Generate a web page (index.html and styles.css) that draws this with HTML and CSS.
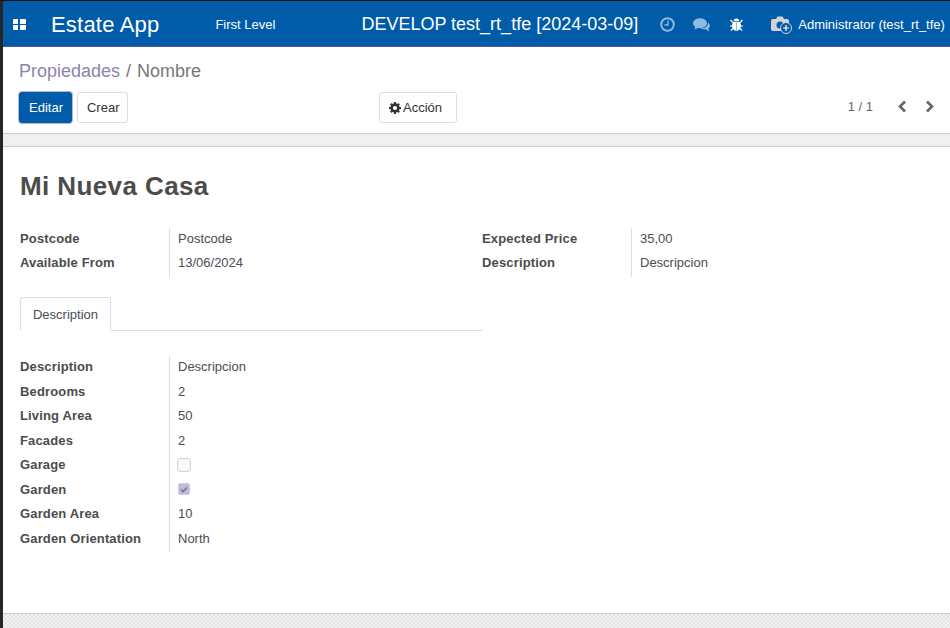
FILE: index.html
```html
<!DOCTYPE html>
<html lang="en">
  <head>
    <meta charset="UTF-8" />
    <meta name="viewport" content="width=device-width, initial-scale=1.0" />
    <title>Estate App</title>
    <link rel="stylesheet" href="styles.css">
  </head>
  <body>
    <header class="navbar">
      <svg class="apps-icon" width="13" height="11" viewBox="0 0 13 11">
        <path fill="#fff" d="M0 1q0-1 1-1h4v5H0zM7 0h5q1 0 1 1v4H7zM0 6h5v5H1q-1 0-1-1zM7 6h6v4q0 1-1 1H7z" />
      </svg>
      <span class="brand">Estate App</span>
      <span class="menu-item">First Level</span>
      <span class="env-name">DEVELOP test_rt_tfe [2024-03-09]</span>
      <div class="systray">
        <svg class="tray-icon" width="15" height="15" viewBox="0 0 15 15">
          <circle cx="7.5" cy="7.5" r="6.3" fill="none" stroke="#8fbbe0" stroke-width="2" />
          <path fill="none" stroke="#8fbbe0" stroke-width="1.3" d="M8 3.5V8H4.5" />
        </svg>
        <svg class="tray-icon" width="17" height="14" viewBox="0 0 17 14">
          <ellipse cx="7" cy="5.2" rx="7" ry="5" fill="#8fbbe0" />
          <path fill="#8fbbe0" d="M2.5 8 1.500 11.500 6 9.500z" />
          <path fill="#8fbbe0" d="M15 4.500c2.400 1.800 2.500 4.500.3 6l1 3-3.800-2.200c-2 .2-3.800-.1-5-1 4 .1 8-1.800 7.500-5.800z" />
        </svg>
        <svg class="tray-icon bug-icon" width="13" height="13" viewBox="0 0 13 13">
          <path fill="#fff" d="M3.800 3.200a2.700 2.700 0 0 1 5.400 0zM3 4h7c.8 1.500 1 3 1 4.500 0 2.500-2.200 4.300-4.500 4.500C4.200 12.800 2 11 2 8.500 2 7 2.200 5.500 3 4z" />
          <path stroke="#fff" stroke-width="1.200" d="M.5 2l2.500 2.500M12.500 2 10 4.500M0 8h2.500M13 8h-2.500M.8 12.500 3 10.500M12.200 12.500 10 10.500" />
          <path stroke="#8fbbe0" d="M6.500 4.500V12.500" />
        </svg>
        <svg class="avatar-icon" width="21" height="18" viewBox="0 0 21 18">
          <path fill="#d4d4d4" d="M2 3h3l1.500-2.500h5L13 3h3q2 0 2 2v8q0 2-2 2H2q-2 0-2-2V5q0-2 2-2z" />
          <circle cx="9" cy="9" r="3.500" fill="#005ba8" />
          <circle cx="15" cy="12" r="5.500" fill="#005ba8" stroke="#d4d4d4" />
          <path stroke="#fff" stroke-width="1.200" d="M15 9v6M12 12h6" />
        </svg>
        <span class="user-name">Administrator (test_rt_tfe)</span>
      </div>
    </header>

    <section class="control-panel">
      <div class="breadcrumb">
        <span class="crumb-link">Propiedades</span>
        <span class="crumb-sep">/</span>
        <span>Nombre</span>
      </div>
      <div class="button-row">
        <div class="main-buttons">
          <button class="btn btn-primary" type="button">Editar</button>
          <button class="btn" type="button">Crear</button>
        </div>
        <button class="btn btn-action" type="button">
          <svg width="12" height="12" viewBox="0 0 12 12">
            <circle cx="6" cy="6" r="3.400" fill="none" stroke="#333" stroke-width="2.600" />
            <path stroke="#333" stroke-width="2" d="M6 0v2M6 10v2M0 6h2M10 6h2M1.800 1.800l1.400 1.400M8.800 8.800l1.400 1.400M10.200 1.800 8.800 3.200M3.200 8.800l-1.400 1.400" />
          </svg>
          Acción
        </button>
        <div class="pager">
          <span class="pager-count">1 / 1</span>
          <svg width="10" height="13" viewBox="0 0 10 13">
            <path fill="none" stroke="#666" stroke-width="2.600" d="M8 1.500 3 6.500l5 5" />
          </svg>
          <svg width="10" height="13" viewBox="0 0 10 13">
            <path fill="none" stroke="#666" stroke-width="2.600" d="M2 1.500l5 5-5 5" />
          </svg>
        </div>
      </div>
    </section>

    <div class="band"></div>

    <main class="sheet">
      <h1>Mi Nueva Casa</h1>

      <div class="top-groups">
        <div class="field-group">
          <div class="field-label">Postcode</div>
          <div class="field-value">Postcode</div>
          <div class="field-label">Available From</div>
          <div class="field-value">13/06/2024</div>
        </div>
        <div class="field-group">
          <div class="field-label">Expected Price</div>
          <div class="field-value">35,00</div>
          <div class="field-label">Description</div>
          <div class="field-value">Descripcion</div>
        </div>
      </div>

      <div class="tabs">
        <div class="tab">Description</div>
      </div>

      <div class="field-group tab-fields">
        <div class="field-label">Description</div>
        <div class="field-value">Descripcion</div>
        <div class="field-label">Bedrooms</div>
        <div class="field-value">2</div>
        <div class="field-label">Living Area</div>
        <div class="field-value">50</div>
        <div class="field-label">Facades</div>
        <div class="field-value">2</div>
        <div class="field-label">Garage</div>
        <div class="field-value"><span class="checkbox"></span></div>
        <div class="field-label">Garden</div>
        <div class="field-value">
          <span class="checkbox checked">
            <svg width="8" height="7" viewBox="0 0 8 7">
              <path fill="none" stroke="#7470a8" stroke-width="1.600" d="M1 3.500 3 5.500 7 1.500" />
            </svg>
          </span>
        </div>
        <div class="field-label">Garden Area</div>
        <div class="field-value">10</div>
        <div class="field-label">Garden Orientation</div>
        <div class="field-value">North</div>
      </div>
    </main>

    <div class="band-bottom"></div>
  </body>
</html>
```

FILE: styles.css
```css
* {
  box-sizing: border-box;
}
html,
body {
  height: 100%;
}
body {
  margin: 0;
  display: flex;
  flex-direction: column;
  overflow: hidden;
  background-color: white;
  border-left: 3px solid #262626;
  border-top: 1px solid #111;
  font-family: "Liberation Sans", Arial, sans-serif;
  font-size: 13px;
  color: #4c4c4c;
}

.navbar {
  height: 46px;
  flex: none;
  display: flex;
  align-items: center;
  padding: 2px 0 0 10px;
  background-color: #005ba8;
  border-bottom: 1px solid #54589a;
  color: white;
  white-space: nowrap;
}
.navbar svg {
  flex: none;
}
.brand {
  margin-left: 25px;
  font-size: 22px;
  letter-spacing: 0.2px;
}
.menu-item {
  margin-left: 56px;
}
.env-name {
  margin-left: 86px;
  font-size: 18px;
}
.systray {
  display: flex;
  align-items: center;
  margin-left: 22px;
}
.tray-icon {
  margin-right: 18px;
}
.bug-icon {
  margin-left: 2px;
  margin-right: 28px;
}
.user-name {
  margin-left: 6px;
}

.control-panel {
  height: 86px;
  flex: none;
  padding: 14px 15px 0 16px;
}
.breadcrumb {
  display: flex;
  gap: 6px;
  height: 21px;
  font-size: 18px;
  line-height: 21px;
  color: #777;
}
.crumb-link {
  color: #8f83ac;
}
.button-row {
  display: flex;
  align-items: center;
  margin-top: 10px;
}
.main-buttons {
  width: 360px;
  display: flex;
  gap: 5px;
}
.btn {
  height: 31px;
  padding: 0 8px 0 9px;
  background-color: white;
  border: 1px solid #dcdce4;
  border-radius: 3px;
  font-family: inherit;
  font-size: 13px;
  color: #333;
}
.btn-primary {
  background-color: #005ba8;
  border-color: #005ba8;
  color: white;
  box-shadow: 0 0 0 1px #b9b6d3;
}
.btn-action {
  display: flex;
  align-items: center;
  gap: 2px;
  padding-right: 14px;
}
.pager {
  margin-left: auto;
  margin-bottom: 2px;
  display: flex;
  align-items: center;
  gap: 18px;
}
.pager-count {
  margin-right: 6px;
  color: #666;
}

.band {
  height: 14px;
  flex: none;
  background-color: #f0f0f0;
  border-top: 1px solid #cccccc;
  border-bottom: 1px solid #cdc9d6;
}

.sheet {
  flex: 1;
  padding: 22px 0 0 17px;
}
h1 {
  margin: 0;
  font-size: 26px;
  letter-spacing: 0.4px;
  line-height: 34px;
  font-weight: bold;
  color: #4c4c4c;
}

.top-groups {
  display: flex;
  margin-top: 24.900px;
}
.top-groups .field-group {
  width: 462px;
}
.field-group {
  display: grid;
  grid-template-columns: 149px 1fr;
  grid-auto-rows: 24.500px;
}
.field-label {
  font-weight: bold;
  letter-spacing: 0.15px;
  line-height: 22px;
}
.field-value {
  padding-left: 8px;
  line-height: 22px;
  border-left: 1px solid #dcdce4;
  color: #4c4c54;
}

.tabs {
  width: 462px;
  height: 34px;
  margin-top: 20.100px;
  border-bottom: 1px solid #dcdce4;
}
.tab {
  width: 91px;
  height: 34px;
  padding-top: 9px;
  text-align: center;
  background-color: white;
  border: 1px solid #dcdce4;
  border-bottom-color: white;
  border-radius: 3px 3px 0 0;
  color: #4c4c54;
}

.tab-fields {
  margin-top: 25.200px;
}
.checkbox {
  display: inline-flex;
  align-items: center;
  justify-content: center;
  width: 14px;
  height: 14px;
  margin: -2px 0 0 -1px;
  vertical-align: middle;
  background-color: #f8f8f8;
  border: 1px solid #cfcfcf;
  border-radius: 4px;
}
.checked {
  width: 12px;
  height: 12px;
  margin-left: 0;
  background-color: #bdbbd8;
  border-color: #d0cfe2;
  border-radius: 2px;
}

.band-bottom {
  height: 15px;
  flex: none;
  background-color: #eaeaea;
  background-image: repeating-conic-gradient(#e4e4e4 0 25%, #f2f2f2 0 50%);
  background-size: 4px 4px;
  border-top: 1px solid #cccccc;
}
```
